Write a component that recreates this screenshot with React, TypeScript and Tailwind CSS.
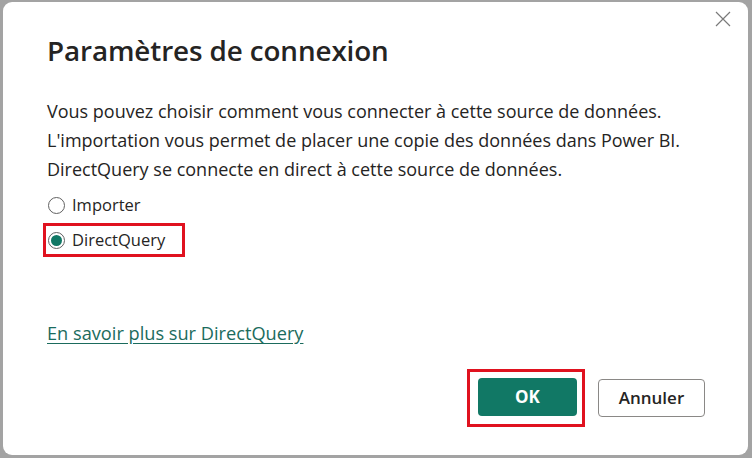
import React from 'react';

function CloseIcon() {
  return (
    <svg width="16" height="16" viewBox="0 0 16 16" className="text-[#7a7a7a]">
      <path d="M1 1L15 15M15 1L1 15" stroke="currentColor" strokeWidth="1.2" fill="none" />
    </svg>
  );
}

function Radio({ checked }: { checked?: boolean }) {
  return (
    <span className="flex h-[17px] w-[17px] shrink-0 items-center justify-center rounded-full border border-[#616161] bg-white">
      {checked && <span className="h-[11px] w-[11px] rounded-full bg-[#117865]" />}
    </span>
  );
}

export default function App() {
  return (
    <main className="flex h-[458px] w-[752px] bg-[#a3a3a3] pb-[3px] pl-[3px] pr-[4px] pt-[2px] font-['Open_Sans',sans-serif]">
      <section className="relative flex h-full w-full flex-col rounded-[9px] bg-white pl-[44px] text-[#252423]">
        <button className="absolute right-[17px] top-[9px]">
          <CloseIcon />
        </button>

        <h1 className="mt-[28px] text-[27.8px] font-semibold leading-[40px] tracking-[-0.1px] text-[#252423]">
          Paramètres de connexion
        </h1>

        <p className="mt-[27px] text-[18px] leading-[29px] text-[#252423]">
          Vous pouvez choisir comment vous connecter à cette source de données.
          <br />
          L'importation vous permet de placer une copie des données dans Power BI.
          <br />
          DirectQuery se connecte en direct à cette source de données.
        </p>

        <div className="mt-[7px] flex flex-col">
          <label className="flex h-[28px] items-center gap-[7px] pl-[1px] text-[16.5px]">
            <Radio />
            Importer
          </label>
          <div className="-ml-[4px] mt-[4px] w-[142px] border-[3px] border-[#e0121f] pl-[2px]">
            <label className="flex h-[28px] items-center gap-[7px] text-[16.5px]">
              <Radio checked />
              DirectQuery
            </label>
          </div>
        </div>

        <a href="#" className="mt-[64px] w-fit text-[18.2px] leading-[24px] text-[#1b6b5d] underline underline-offset-[3px]">
          En savoir plus sur DirectQuery
        </a>

        <div className="mb-[28px] mt-auto flex items-center justify-end gap-[13px] pr-[43px]">
          <div className="border-[3px] border-[#e0121f] pb-[8px] pl-[8px] pr-[5px] pt-[6px]">
            <button className="block h-[38px] w-[99px] rounded-[4px] bg-[#117865] text-[17px] font-bold text-white">
              OK
            </button>
          </div>
          <button className="h-[38px] w-[107px] rounded-[4px] border border-[#8a8886] bg-white text-[17px] font-semibold text-[#252423]">
            Annuler
          </button>
        </div>
      </section>
    </main>
  );
}
